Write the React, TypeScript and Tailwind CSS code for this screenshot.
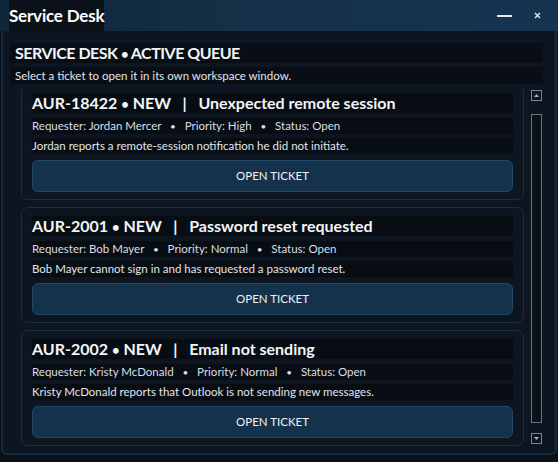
const tickets = [
  {
    id: "AUR-18422",
    title: "Unexpected remote session",
    requester: "Jordan Mercer",
    priority: "High",
    desc: "Jordan reports a remote-session notification he did not initiate.",
  },
  {
    id: "AUR-2001",
    title: "Password reset requested",
    requester: "Bob Mayer",
    priority: "Normal",
    desc: "Bob Mayer cannot sign in and has requested a password reset.",
  },
  {
    id: "AUR-2002",
    title: "Email not sending",
    requester: "Kristy McDonald",
    priority: "Normal",
    desc: "Kristy McDonald reports that Outlook is not sending new messages.",
  },
];

// small bullet separator, the font's own bullet is too heavy
const Dot = ({ cls }: { cls: string }) => <span className={cls}>•</span>;

function TicketCard({ t, first }: { t: (typeof tickets)[number]; first?: boolean }) {
  return (
    <div
      className={`shrink-0 rounded-[7px] border border-[#1a2e42] bg-[#0d1620] px-[10px] pt-[8px] pb-[7px] flex flex-col ${
        first ? "-mt-[4px]" : ""
      }`}
    >
      <div className="h-[20px] bg-[#080d13] text-[16px] leading-[20px] font-bold text-[#f2f5f8] whitespace-pre">
        {`${t.id} `}
        <Dot cls="text-[13px]" />
        {` NEW   |   ${t.title}`}
      </div>
      <div className="mt-[5px] h-[16px] bg-[#080d13] text-[11.5px] leading-[16px] text-[#d9dfe6] whitespace-pre">
        {`Requester: ${t.requester}   `}
        <Dot cls="text-[10px]" />
        {`   Priority: ${t.priority}   `}
        <Dot cls="text-[10px]" />
        {`   Status: Open`}
      </div>
      <div className="mt-[4px] h-[16px] bg-[#080d13] text-[11.5px] leading-[16px] text-[#e1e6ec]">
        {t.desc}
      </div>
      <button className="mt-[6px] h-[32px] rounded-[6px] border border-[#1f4766] bg-[#14324b] text-[11.5px] text-[#eef2f6]">
        OPEN TICKET
      </button>
    </div>
  );
}

export default function App() {
  return (
    <div
      className="w-[558px] h-[462px] bg-[#0a1017] overflow-hidden"
      style={{ fontFamily: 'Lato, "Open Sans", sans-serif' }}
    >
      {/* Title bar */}
      <div className="h-[31px] flex items-stretch bg-gradient-to-r from-[#10263a] via-[#153149] to-[#163450]">
        <div className="ml-[9px] bg-[#0a1119] flex items-center text-[17px] font-bold text-white tracking-[-0.2px]">
          Service Desk
        </div>
        <div className="ml-auto flex items-center gap-[22px] pr-[17px]">
          <svg width="15" height="4" viewBox="0 0 15 4">
            <rect x="0" y="1" width="15" height="2" fill="#e6ebf0" />
          </svg>
          <svg width="7" height="7" viewBox="0 0 7 7">
            <path d="M1 1 L6 6 M6 1 L1 6" stroke="#e6ebf0" strokeWidth="1.4" />
          </svg>
        </div>
      </div>

      {/* Body panel */}
      <div className="h-[424px] mx-[1px] border-x-2 border-b-2 border-[#152a3e] rounded-b-[6px] bg-[#0d1620] flex flex-col">
        <div className="pt-[12px] pl-[7px] pr-[12px]">
          <div className="h-[20px] bg-[#090e15] pl-[5px] text-[16px] leading-[20px] font-bold text-[#f2f5f8] tracking-[-0.5px] whitespace-pre">
            {"SERVICE DESK "}
            <Dot cls="text-[13px]" />
            {" ACTIVE QUEUE"}
          </div>
          <div className="mt-[4px] h-[17px] bg-[#090e15] pl-[5px] text-[11.5px] leading-[17px] text-[#e1e6ec]">
            Select a ticket to open it in its own workspace window.
          </div>
        </div>

        <div className="mt-[4px] flex pl-[18px]">
          {/* Ticket list viewport */}
          <div className="w-[503px] h-[358px] overflow-hidden flex flex-col gap-[7px]">
            {tickets.map((t, i) => (
              <TicketCard key={t.id} t={t} first={i === 0} />
            ))}
          </div>

          {/* Scrollbar */}
          <div className="ml-[6px] w-[12px] h-[358px] flex flex-col items-center pt-[2px]">
            <div className="w-[11px] h-[11px] border border-[#7a848f] flex items-center justify-center">
              <svg width="5" height="3" viewBox="0 0 5 3">
                <path d="M2.5 0 L5 3 L0 3 Z" fill="#aab3bd" />
              </svg>
            </div>
            <div className="mt-[13px] w-[11px] h-[309px] border border-[#6a747f] bg-[#0a1118]" />
            <div className="mt-[10px] w-[11px] h-[11px] border border-[#7a848f] flex items-center justify-center">
              <svg width="5" height="3" viewBox="0 0 5 3">
                <path d="M0 0 L5 0 L2.5 3 Z" fill="#aab3bd" />
              </svg>
            </div>
          </div>
        </div>
      </div>
    </div>
  );
}
